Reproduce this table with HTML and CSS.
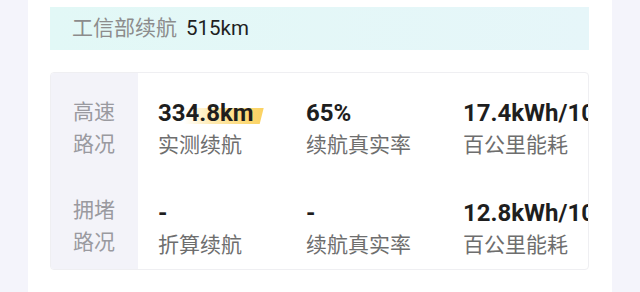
FILE: index.html
```html
<!DOCTYPE html>
<html lang="zh-CN">
<head>
<meta charset="utf-8">
<link rel="stylesheet" href="styles.css">
</head>
<body>
<div class="page">
  <div class="side"></div>
  <main class="main">
    <div class="banner">
      <span class="banner-label">工信部续航</span>
      <span class="banner-value">515km</span>
    </div>
    <div class="card">
      <div class="row">
        <div class="cond">高速<br>路况</div>
        <div class="stats">
          <div class="stat s1">
            <div class="val"><span class="hl">334.8km</span></div>
            <div class="lbl">实测续航</div>
          </div>
          <div class="stat s2">
            <div class="val">65%</div>
            <div class="lbl">续航真实率</div>
          </div>
          <div class="stat s3">
            <div class="val">17.4kWh/100km</div>
            <div class="lbl">百公里能耗</div>
          </div>
        </div>
      </div>
      <div class="row">
        <div class="cond">拥堵<br>路况</div>
        <div class="stats">
          <div class="stat s1">
            <div class="val">-</div>
            <div class="lbl">折算续航</div>
          </div>
          <div class="stat s2">
            <div class="val">-</div>
            <div class="lbl">续航真实率</div>
          </div>
          <div class="stat s3">
            <div class="val">12.8kWh/100km</div>
            <div class="lbl">百公里能耗</div>
          </div>
        </div>
      </div>
    </div>
  </main>
  <div class="side"></div>
</div>
</body>
</html>
```

FILE: styles.css
```css
html, body {
  margin: 0;
  padding: 0;
}
body {
  width: 640px;
  height: 292px;
  overflow: hidden;
  background: #f4f4fb;
  font-family: "Roboto", "Noto Sans CJK SC", sans-serif;
}
.page {
  display: flex;
  height: 292px;
}
.side {
  flex: 1;
  background: #f4f4fb;
}
.main {
  width: 584px;
  flex: none;
  background: #ffffff;
  padding: 7px 23px 0 22px;
  box-sizing: border-box;
}
.banner {
  height: 43px;
  background: linear-gradient(90deg, #e2f8f6, #e6f6f9);
  display: flex;
  align-items: center;
  padding-left: 22px;
  font-size: 20.5px;
  line-height: 1;
}
.banner-label {
  color: #8c8c8c;
  font-size: 21px;
  margin-right: 9px;
}
.banner-value {
  color: #1f1f1f;
}
.card {
  margin-top: 22px;
  height: 198px;
  border: 1px solid #efeff2;
  border-radius: 4px;
  overflow: hidden;
  box-sizing: border-box;
  display: flex;
  flex-direction: column;
}
.row {
  display: flex;
  height: 100px;
  flex: none;
}
.row + .row {
  flex: 1;
}
.cond {
  width: 87px;
  flex: none;
  background: #f3f3f9;
  padding: 23px 0 0 22px;
  box-sizing: border-box;
  color: #9a9aa0;
  font-size: 21px;
  line-height: 32px;
}
.row + .row .cond {
  padding-top: 21px;
}
.stats {
  flex: 1;
  display: flex;
  padding: 24px 0 0 20px;
  min-width: 0;
  overflow: hidden;
}
.stat {
  flex: none;
  white-space: nowrap;
}
.s1 { width: 148px; }
.s2 { width: 157px; }
.s3 { flex: 1; min-width: 0; overflow: hidden; }
.val {
  font-size: 24px;
  font-weight: 700;
  line-height: 32px;
  color: #1e1e1e;
}
.lbl {
  font-size: 21px;
  line-height: 32px;
  color: #6e6e6e;
}
.hl {
  position: relative;
  display: inline-block;
  isolation: isolate;
}
.hl::after {
  content: "";
  position: absolute;
  left: 26px;
  right: -10px;
  top: 11px;
  height: 16px;
  z-index: -1;
  background: linear-gradient(90deg, rgba(255, 236, 180, 0), #ffeab0 35%, #fcd873 80%, #fbd262);
  clip-path: polygon(0 0, 100% 0, calc(100% - 4px) 100%, 0 100%);
}
```
